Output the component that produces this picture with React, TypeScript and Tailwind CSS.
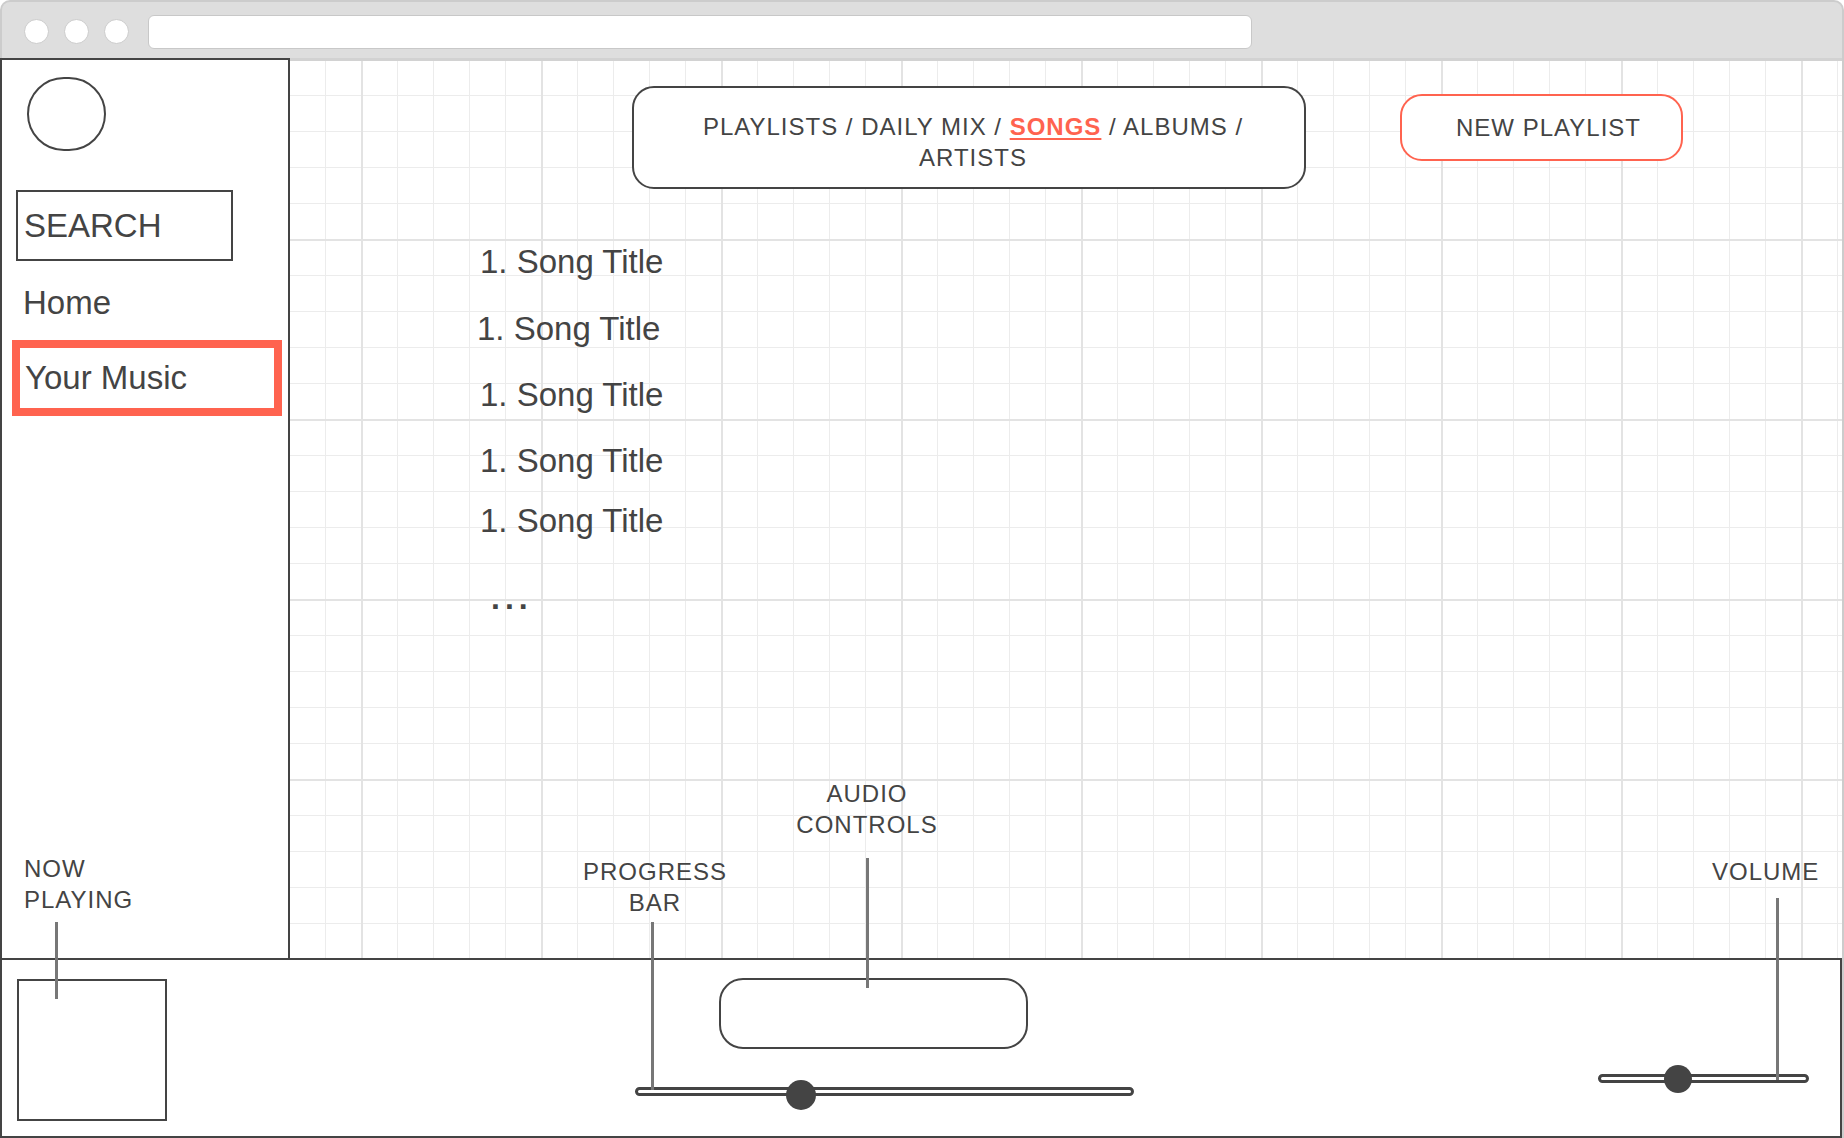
import React from "react";

const SONGS = [
  { title: "1. Song Title", className: "mt-[55px]" },
  { title: "1. Song Title", className: "mt-[31px] -ml-[3px]" },
  { title: "1. Song Title", className: "mt-[30px]" },
  { title: "1. Song Title", className: "mt-[30px]" },
  { title: "1. Song Title", className: "mt-[24px]" },
];

const TEXT = "text-[#444]";
const LABEL = "text-[24px] leading-[31px] tracking-[1px] text-[#444]";

const Chrome = () => (
  <div className="flex h-[58px] items-center rounded-t-[10px] border-2 border-b-0 border-[#cccccc] bg-[#dedede] pl-[22px] pt-[3px]">
    {/* window dots */}
    <div className="flex gap-[15px]">
      <div className="h-[25px] w-[25px] rounded-full border-[1.5px] border-[#cccccc] bg-white" />
      <div className="h-[25px] w-[25px] rounded-full border-[1.5px] border-[#cccccc] bg-white" />
      <div className="h-[25px] w-[25px] rounded-full border-[1.5px] border-[#cccccc] bg-white" />
    </div>
    {/* address bar */}
    <div className="ml-[19px] h-[34px] w-[1104px] rounded-[6px] border-[1.5px] border-[#c8c8c8] bg-white" />
  </div>
);

const Sidebar = () => (
  <div className="flex w-[290px] shrink-0 flex-col items-start border-2 border-b-0 border-[#444] bg-white">
    {/* avatar */}
    <div className="ml-[25px] mt-[17px] h-[74px] w-[79px] rounded-full border-2 border-[#444]" />

    {/* search */}
    <div className="ml-[14px] mt-[39px] flex h-[71px] w-[217px] items-center border-2 border-[#444] pl-[6px]">
      <span className={`text-[33px] leading-[36px] ${TEXT}`}>SEARCH</span>
    </div>

    <p className={`ml-[21px] mt-[24px] text-[33px] leading-[36px] ${TEXT}`}>Home</p>

    {/* active item */}
    <div className="ml-[10px] mt-[19px] flex h-[76px] w-[270px] items-center border-8 border-[#ff634f] pl-[5px]">
      <span className={`text-[33px] leading-[36px] ${TEXT}`}>Your Music</span>
    </div>
  </div>
);

const Main = () => (
  <div className="flex flex-1 flex-col border-t-[3px] border-[#d2d2d2]">
    {/* header */}
    <div className="flex items-start pl-[342px] pt-[25px]">
      <div className="h-[103px] w-[674px] rounded-[22px] border-2 border-[#444] bg-white pl-[8px] pt-[23px] text-center">
        <p className={LABEL + " leading-[30px]"}>
          PLAYLISTS / DAILY MIX /{" "}
          <span className="font-bold text-[#ff634f] underline decoration-2 underline-offset-[3px]">
            SONGS
          </span>{" "}
          / ALBUMS /
          <br />
          ARTISTS
        </p>
      </div>
      <div className="ml-[94px] mt-[8px] flex h-[67px] w-[283px] items-center justify-center rounded-[22px] border-2 border-[#ff634f] bg-white pl-[14px]">
        <span className={LABEL}>NEW PLAYLIST</span>
      </div>
    </div>

    {/* songs */}
    <div className="ml-[190px] flex flex-col items-start">
      {SONGS.map((song, i) => (
        <p
          key={i}
          className={`text-[33px] leading-[36px] ${TEXT} ${song.className}`}
        >
          {song.title}
        </p>
      ))}
      <p className={`ml-[11px] mt-[41px] text-[32px] font-bold leading-[36px] tracking-[5px] ${TEXT}`}>
        ...
      </p>
    </div>
  </div>
);

const PlayerBar = () => (
  <div className="flex h-[180px] w-[1842px] items-start border-2 border-[#444] bg-white">
    {/* now playing cover */}
    <div className="ml-[15px] mt-[19px] h-[142px] w-[150px] shrink-0 border-2 border-[#444]" />

    {/* controls + progress */}
    <div className="ml-[468px] flex w-[499px] shrink-0 flex-col items-start">
      <div className="ml-[84px] mt-[18px] h-[71px] w-[309px] rounded-[24px] border-2 border-[#444]" />
      <div className="relative mt-[38px] h-[9px] w-[499px] rounded-full border-[3px] border-[#444] bg-white">
        <div className="absolute left-[148px] top-[-10px] h-[30px] w-[30px] rounded-full bg-[#444]" />
      </div>
    </div>

    {/* volume */}
    <div className="relative ml-[464px] mt-[114px] h-[9px] w-[211px] shrink-0 rounded-full border-[3px] border-[#444] bg-white">
      <div className="absolute left-[63px] top-[-12px] h-[28px] w-[28px] rounded-full bg-[#444]" />
    </div>
  </div>
);

const Annotations = () => (
  <>
    <p className={`absolute left-[24px] top-[853px] ${LABEL}`}>
      NOW
      <br />
      PLAYING
    </p>
    <div className="absolute left-[55px] top-[922px] h-[77px] w-[3px] bg-[#777]" />

    <p className={`absolute left-[555px] top-[856px] w-[200px] text-center ${LABEL}`}>
      PROGRESS
      <br />
      BAR
    </p>
    <div className="absolute left-[651px] top-[922px] h-[168px] w-[3px] bg-[#777]" />

    <p className={`absolute left-[767px] top-[778px] w-[200px] text-center ${LABEL}`}>
      AUDIO
      <br />
      CONTROLS
    </p>
    <div className="absolute left-[866px] top-[858px] h-[130px] w-[3px] bg-[#777]" />

    <p className={`absolute left-[1712px] top-[856px] ${LABEL}`}>VOLUME</p>
    <div className="absolute left-[1776px] top-[898px] h-[182px] w-[3px] bg-[#777]" />
  </>
);

export default function App() {
  return (
    <div className="relative h-[1138px] w-[1844px] overflow-hidden bg-white font-['Liberation_Sans',Arial,sans-serif]">
      <Chrome />
      <div className="flex h-[1080px] flex-col border-r-2 border-[#cccccc] [background-image:linear-gradient(to_right,#e3e3e3_2px,transparent_2px),linear-gradient(to_bottom,#e3e3e3_2px,transparent_2px),linear-gradient(to_right,#ececec_1px,transparent_1px),linear-gradient(to_bottom,#ececec_1px,transparent_1px)] [background-size:180px_180px,180px_180px,36px_36px,36px_36px] [background-position:1px_1px]">
        <div className="flex h-[900px]">
          <Sidebar />
          <Main />
        </div>
        <PlayerBar />
      </div>
      <Annotations />
    </div>
  );
}
